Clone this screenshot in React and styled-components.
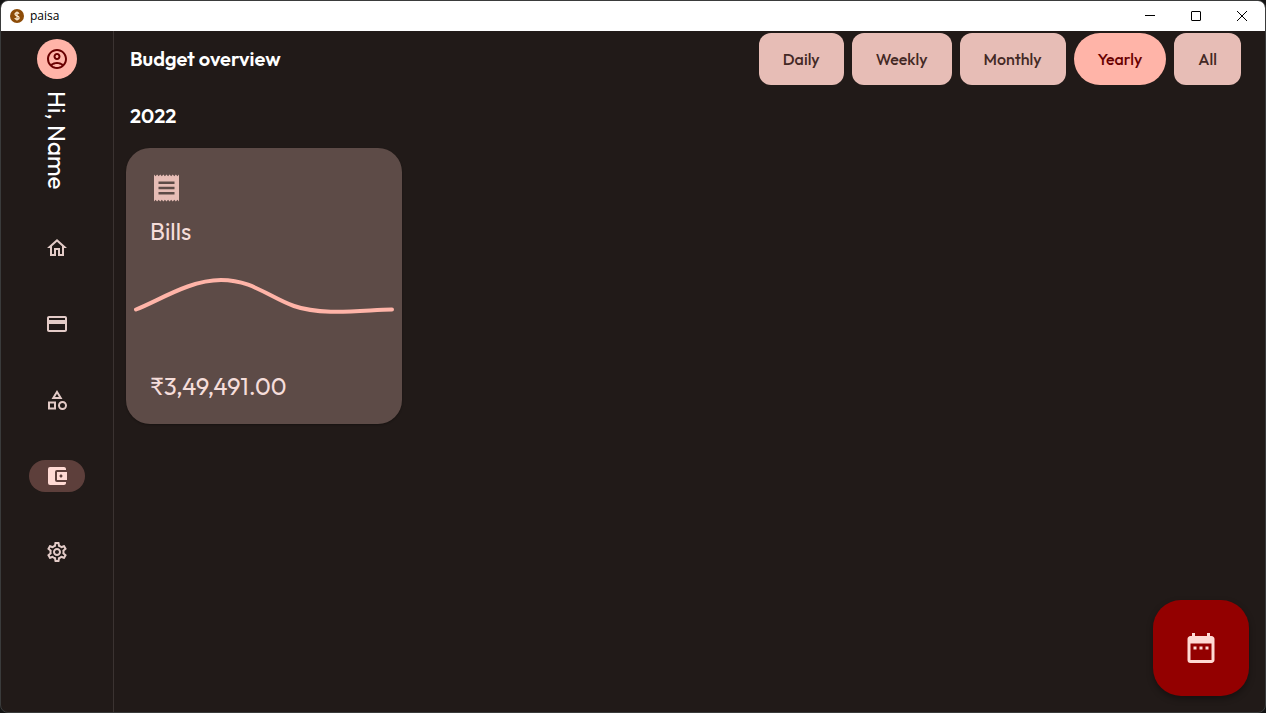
import React from "react";
import styled, { createGlobalStyle } from "styled-components";
import {
  MdOutlineAccountCircle,
  MdOutlineHome,
  MdCreditCard,
  MdOutlineCategory,
  MdOutlineSettings,
  MdAccountBalanceWallet,
  MdDateRange,
} from "react-icons/md";

const GlobalStyle = createGlobalStyle`
  *, *::before, *::after { box-sizing: border-box; }
  body {
    margin: 0;
    background: #141414;
    font-family: Outfit, Lato, "Liberation Sans", sans-serif;
  }
  button { font: inherit; border: 0; padding: 0; cursor: pointer; }
  h1, h2, h3, p { margin: 0; }
`;

const Window = styled.div`
  display: flex;
  flex-direction: column;
  min-height: 100vh;
  border: 1px solid #3a3b3b;
  border-radius: 8px;
  overflow: hidden;
  background: #211a18;
`;

const TitleBar = styled.header`
  display: flex;
  align-items: center;
  height: 30px;
  padding-left: 9px;
  background: #fff;
  color: #000;
`;

const AppName = styled.span`
  flex: 1;
  padding-left: 6px;
  font: 12px/16px "Open Sans", "Noto Sans", sans-serif;
`;

const WindowButton = styled.button`
  display: grid;
  place-items: center;
  width: 46px;
  height: 30px;
  background: transparent;
`;

const Body = styled.div`
  display: flex;
  flex: 1;
`;

const Sidebar = styled.aside`
  display: flex;
  flex-direction: column;
  align-items: center;
  width: 113px;
  padding-top: 8px;
  border-right: 1px solid #3b3331;
`;

const Avatar = styled.button`
  display: grid;
  place-items: center;
  width: 40px;
  height: 40px;
  border-radius: 50%;
  background: #ffb4a8;
  color: #690000;
`;

const Greeting = styled.p`
  height: 100px;
  margin-top: 12px;
  writing-mode: vertical-rl;
  white-space: nowrap;
  font-size: 24px;
  line-height: 32px;
  color: #fff;
`;

const Nav = styled.nav`
  display: flex;
  flex-direction: column;
  gap: 44px;
  margin-top: 41px;
`;

const NavButton = styled.button`
  display: grid;
  place-items: center;
  width: 56px;
  height: 32px;
  border-radius: 16px;
  background: ${(p) => (p.$active ? "#5d3f3b" : "transparent")};
  color: ${(p) => (p.$active ? "#ffdad4" : "#e3cbc7")};
`;

const Main = styled.main`
  flex: 1;
  min-width: 0;
  padding: 2px 24px 16px 12px;
`;

const Toolbar = styled.div`
  display: flex;
  align-items: center;
  justify-content: space-between;
`;

const Title = styled.h1`
  padding-left: 4px;
  font-size: 20px;
  line-height: 28px;
  font-weight: 600;
  color: #fff;
`;

const Filters = styled.div`
  display: flex;
  gap: 8px;
`;

const Filter = styled.button`
  height: 52px;
  padding: 0 24px;
  border-radius: ${(p) => (p.$active ? "26px" : "12px")};
  background: ${(p) => (p.$active ? "#ffb4a8" : "#e7bdb6")};
  color: ${(p) => (p.$active ? "#690000" : "#442925")};
  font-size: 16px;
  line-height: 24px;
  font-weight: 500;
`;

const Year = styled(Title).attrs({ as: "h2" })`
  margin-top: 17px;
`;

const Card = styled.article`
  display: flex;
  flex-direction: column;
  width: 276px;
  height: 276px;
  margin-top: 18px;
  padding: 24px 8px 22px;
  border-radius: 24px;
  background: #5d4b47;
  color: #f5ddda;
  box-shadow: 0 1px 2px rgba(0, 0, 0, 0.3);
`;

const CardIcon = styled.span`
  display: flex;
  padding-left: 16px;
  color: #e7bdb6;
`;

const CardTitle = styled.h3`
  margin-top: 11px;
  padding-left: 16px;
  font-size: 24px;
  line-height: 32px;
  font-weight: 400;
`;

const Trend = styled.svg`
  display: block;
  width: 100%;
  height: 48px;
  margin-top: 25px;
`;

const Amount = styled.p`
  margin-top: auto;
  padding-left: 16px;
  font-size: 24px;
  line-height: 32px;
`;

const DateButton = styled.button`
  position: fixed;
  right: 17px;
  bottom: 17px;
  display: grid;
  place-items: center;
  width: 96px;
  height: 96px;
  border-radius: 28px;
  background: #930000;
  color: #ffdad4;
  box-shadow: 0 3px 6px rgba(0, 0, 0, 0.35);
`;

const Logo = () => (
  <svg width="14" height="14" viewBox="0 0 14 14" aria-hidden="true">
    <circle cx="7" cy="7" r="7" fill="#8d4c08" />
    <path
      d="M9 4.8C8.7 4 8 3.7 7 3.7c-1.200 0-2 .5-2 1.500 0 2.200 4.100 1.200 4.100 3.500 0 1.100-.9 1.600-2.100 1.600-1.100 0-1.900-.4-2.200-1.300M7 2.500v9"
      fill="none"
      stroke="#fff0d8"
      strokeWidth="1.200"
    />
  </svg>
);

const ReceiptIcon = () => (
  <svg width="32" height="32" viewBox="0 0 32 32" fill="currentColor" aria-hidden="true">
    <path
      fillRule="evenodd"
      d="M4 2.500l1.560 1.800 1.560-1.800 1.560 1.800 1.560-1.800 1.560 1.800 1.560-1.800 1.560 1.800 1.560-1.800 1.560 1.800 1.560-1.800 1.560 1.800 1.560-1.800 1.560 1.800 1.560-1.800 1.560 1.800L29 2.500v27l-1.600-1.800-1.560 1.800-1.560-1.800-1.560 1.800-1.560-1.800-1.560 1.800-1.560-1.800-1.560 1.800-1.560-1.800-1.560 1.800-1.560-1.800-1.560 1.800-1.560-1.800-1.560 1.800-1.560-1.800L4 29.500zM8.500 9.500v2.400h16V9.500zm0 5.300v2.400h16v-2.400zm0 5.300v2.400h16v-2.400z"
    />
  </svg>
);

const navItems = [
  { label: "Home", Icon: MdOutlineHome },
  { label: "Accounts", Icon: MdCreditCard },
  { label: "Categories", Icon: MdOutlineCategory },
  { label: "Budget", Icon: MdAccountBalanceWallet, active: true },
  { label: "Settings", Icon: MdOutlineSettings },
];

const periods = ["Daily", "Weekly", "Monthly", "Yearly", "All"];

export default function App() {
  return (
    <>
      <GlobalStyle />
      <Window>
        <TitleBar>
          <Logo />
          <AppName>paisa</AppName>
          <WindowButton aria-label="Minimize">
            <svg width="10" height="10" stroke="#000" fill="none"><path d="M0 4.500h10" /></svg>
          </WindowButton>
          <WindowButton aria-label="Maximize">
            <svg width="10" height="10" stroke="#000" fill="none"><rect x=".5" y=".5" width="9" height="9" rx=".5" /></svg>
          </WindowButton>
          <WindowButton aria-label="Close">
            <svg width="10" height="10" stroke="#000" fill="none"><path d="M0 0l10 10M10 0L0 10" /></svg>
          </WindowButton>
        </TitleBar>
        <Body>
          <Sidebar>
            <Avatar aria-label="Profile"><MdOutlineAccountCircle size={24} /></Avatar>
            <Greeting>Hi, Name</Greeting>
            <Nav aria-label="Main">
              {navItems.map(({ label, Icon, active }) => (
                <NavButton key={label} aria-label={label} $active={active}>
                  <Icon size={24} />
                </NavButton>
              ))}
            </Nav>
          </Sidebar>
          <Main>
            <Toolbar>
              <Title>Budget overview</Title>
              <Filters>
                {periods.map((period) => (
                  <Filter key={period} $active={period === "Yearly"} aria-pressed={period === "Yearly"}>
                    {period}
                  </Filter>
                ))}
              </Filters>
            </Toolbar>
            <Year>2022</Year>
            <Card>
              <CardIcon><ReceiptIcon /></CardIcon>
              <CardTitle>Bills</CardTitle>
              <Trend viewBox="0 0 260 48" aria-hidden="true">
                <path
                  d="M2 37.500C26 28 56 8 87 8s48 17 73 26c28 10 70 4 98 3.500"
                  fill="none"
                  stroke="#ffb4a8"
                  strokeWidth="4"
                  strokeLinecap="round"
                />
              </Trend>
              <Amount>₹3,49,491.00</Amount>
            </Card>
          </Main>
        </Body>
        <DateButton aria-label="Select date range"><MdDateRange size={36} /></DateButton>
      </Window>
    </>
  );
}
